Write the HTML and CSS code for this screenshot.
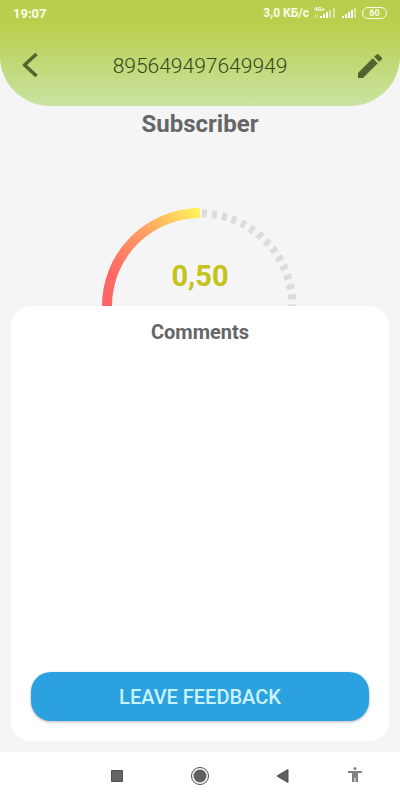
FILE: index.html
```html
<!DOCTYPE html>
<html lang="en">

<head>
    <meta charset="UTF-8">
    <meta name="viewport" content="width=device-width, initial-scale=1.0">
    <title>Subscriber</title>
    <link rel="stylesheet" href="styles.css">
</head>

<body>
    <header class="header">
        <div class="status-bar">
            <span class="clock">19:07</span>
            <div class="status-icons">
                <span>3,0 КБ/с</span>
                <svg width="22" height="14" viewBox="0 0 22 14" fill="#fff">
                    <text x="0" y="5" class="network">4G+</text>
                    <path d="M1.500 8v4M3.500 8v4" stroke="#fff" stroke-width="1" opacity=".4" />
                    <path d="M6 10h2v2H6zM9 8h2v4H9zM12 6h2v6h-2z" />
                    <path d="M15 4h2v8h-2zM19 2h2v10h-2z" opacity=".5" />
                </svg>
                <svg width="16" height="14" viewBox="0 0 16 14" fill="#fff">
                    <path d="M1 10h2v2H1zM4 8h2v4H4zM7 6h2v6H7zM10 4h2v8h-2z" />
                    <path d="M13 2h2v10h-2z" opacity=".5" />
                </svg>
                <span class="battery">60</span>
            </div>
        </div>
        <div class="toolbar">
            <button class="icon-button" aria-label="Back">
                <svg width="24" height="26" viewBox="0 0 24 26" fill="none" stroke="#4f6430" stroke-width="3.500" stroke-linejoin="round">
                    <path d="M18.500 1L6.500 12l12 11" />
                </svg>
            </button>
            <h1 class="phone">895649497649949</h1>
            <button class="icon-button" aria-label="Edit">
                <svg width="32" height="32" viewBox="0 0 24 24" fill="#4f6430">
                    <path d="M3 17.250V21h3.750L17.810 9.940l-3.750-3.750L3 17.250zM20.710 7.040a1 1 0 0 0 0-1.410l-2.340-2.340a1 1 0 0 0-1.410 0l-1.830 1.830 3.750 3.750 1.830-1.830z" />
                </svg>
            </button>
        </div>
    </header>

    <main class="content">
        <h2 class="title">Subscriber</h2>

        <div class="rating">
            <svg class="gauge" width="196" height="98" viewBox="0 0 196 98" fill="none">
                <defs>
                    <linearGradient id="score" gradientUnits="userSpaceOnUse" x1="12" y1="72" x2="98" y2="0">
                        <stop offset="0" stop-color="#ff6666" />
                        <stop offset="0.5" stop-color="#ffa264" />
                        <stop offset="1" stop-color="#fff95a" />
                    </linearGradient>
                </defs>
                <path d="M98 5.500A92.500 92.500 0 0 1 190.500 98" stroke="#dcdcdc" stroke-width="8" stroke-dasharray="5 5.100" stroke-dashoffset="-2" />
                <path d="M5 98A93 93 0 0 1 98 5" stroke="url(#score)" stroke-width="10" />
            </svg>
            <span class="score">0,50</span>
        </div>

        <section class="card">
            <h3 class="card-title">Comments</h3>
            <button class="feedback">LEAVE FEEDBACK</button>
        </section>
    </main>

    <nav class="nav-bar">
        <button class="nav-button" aria-label="Recent apps">
            <svg width="20" height="20" viewBox="0 0 20 20">
                <path d="M4.500 4.500h11v11h-11z" fill="#666" stroke="#505050" />
            </svg>
        </button>
        <button class="nav-button" aria-label="Home">
            <svg width="20" height="20" viewBox="0 0 20 20">
                <circle cx="10" cy="10" r="8.500" fill="none" stroke="#484848" />
                <circle cx="10" cy="10" r="6.500" fill="#606060" />
            </svg>
        </button>
        <button class="nav-button" aria-label="Back">
            <svg width="20" height="20" viewBox="0 0 20 20">
                <path d="M4 10l11-6.500v13z" fill="#606060" stroke="#505050" stroke-linejoin="round" />
            </svg>
        </button>
        <button class="nav-button accessibility" aria-label="Accessibility">
            <svg width="20" height="20" viewBox="0 0 20 20" fill="#808080">
                <circle cx="10" cy="2.500" r="1.500" />
                <path d="M3 5h14v2h-4v9h-2.500v-4.500h-1V16H7V7H3z" />
            </svg>
        </button>
    </nav>
</body>

</html>
```

FILE: styles.css
```css
* {
    box-sizing: border-box;
}

body {
    display: flex;
    flex-direction: column;
    min-height: 100vh;
    margin: 0;
    font-family: Roboto, "Liberation Sans", sans-serif;
    background-color: #f5f5f5;
    color: #666;
}

h1,
h2,
h3 {
    margin: 0;
}

button {
    padding: 0;
    border: none;
    background: none;
    font-family: inherit;
    cursor: pointer;
}

svg {
    display: block;
}

.header {
    height: 106px;
    border-radius: 0 0 50px 50px;
    background: linear-gradient(#b8cf4e 24%, #cae3a2);
}

.status-bar {
    display: flex;
    justify-content: space-between;
    align-items: center;
    height: 26px;
    padding: 0 13px;
    font-size: 12px;
    font-weight: bold;
    color: #fbfde8;
}

.clock {
    font-size: 13px;
}

.status-icons {
    display: flex;
    align-items: center;
    gap: 5px;
}

.network {
    font-size: 6px;
    font-weight: bold;
}

.battery {
    width: 25px;
    height: 12px;
    border: 1px solid #fbfde8;
    border-radius: 6px;
    font-size: 9px;
    line-height: 10px;
    text-align: center;
}

.toolbar {
    display: flex;
    justify-content: space-between;
    align-items: center;
    height: 80px;
    padding: 0 14px;
}

.icon-button {
    display: flex;
    justify-content: center;
    align-items: center;
    width: 32px;
    height: 32px;
}

.phone {
    font-size: 21px;
    font-weight: 300;
    color: #36471c;
}

.content {
    display: flex;
    flex: 1;
    flex-direction: column;
    padding: 0 11px 11px;
}

.title {
    font-size: 24px;
    line-height: 36px;
    text-align: center;
}

.rating {
    display: grid;
    justify-items: center;
    margin-top: 66px;
}

.gauge,
.score {
    grid-area: 1 / 1;
}

.score {
    align-self: end;
    padding-bottom: 12px;
    font-size: 29px;
    font-weight: bold;
    line-height: 36px;
    color: #c4c31a;
}

.card {
    display: flex;
    flex: 1;
    flex-direction: column;
    justify-content: space-between;
    padding: 8px 20px 20px;
    border-radius: 20px;
    background: #fff;
}

.card-title {
    font-size: 20px;
    line-height: 36px;
    text-align: center;
}

.feedback {
    height: 49px;
    border-radius: 20px;
    background: #2ca1df;
    box-shadow: 0 1px 3px rgba(0, 0, 0, 0.3);
    font-size: 20px;
    font-weight: 500;
    color: #c9f3ff;
}

.nav-bar {
    display: grid;
    grid-template-columns: 1fr 83px 83px 83px 1fr;
    align-items: center;
    height: 48px;
    background: #fff;
}

.nav-button {
    display: flex;
    justify-content: center;
}

.nav-button:first-child {
    grid-column: 2;
}

.accessibility {
    justify-content: flex-start;
    padding-left: 20px;
}
```
